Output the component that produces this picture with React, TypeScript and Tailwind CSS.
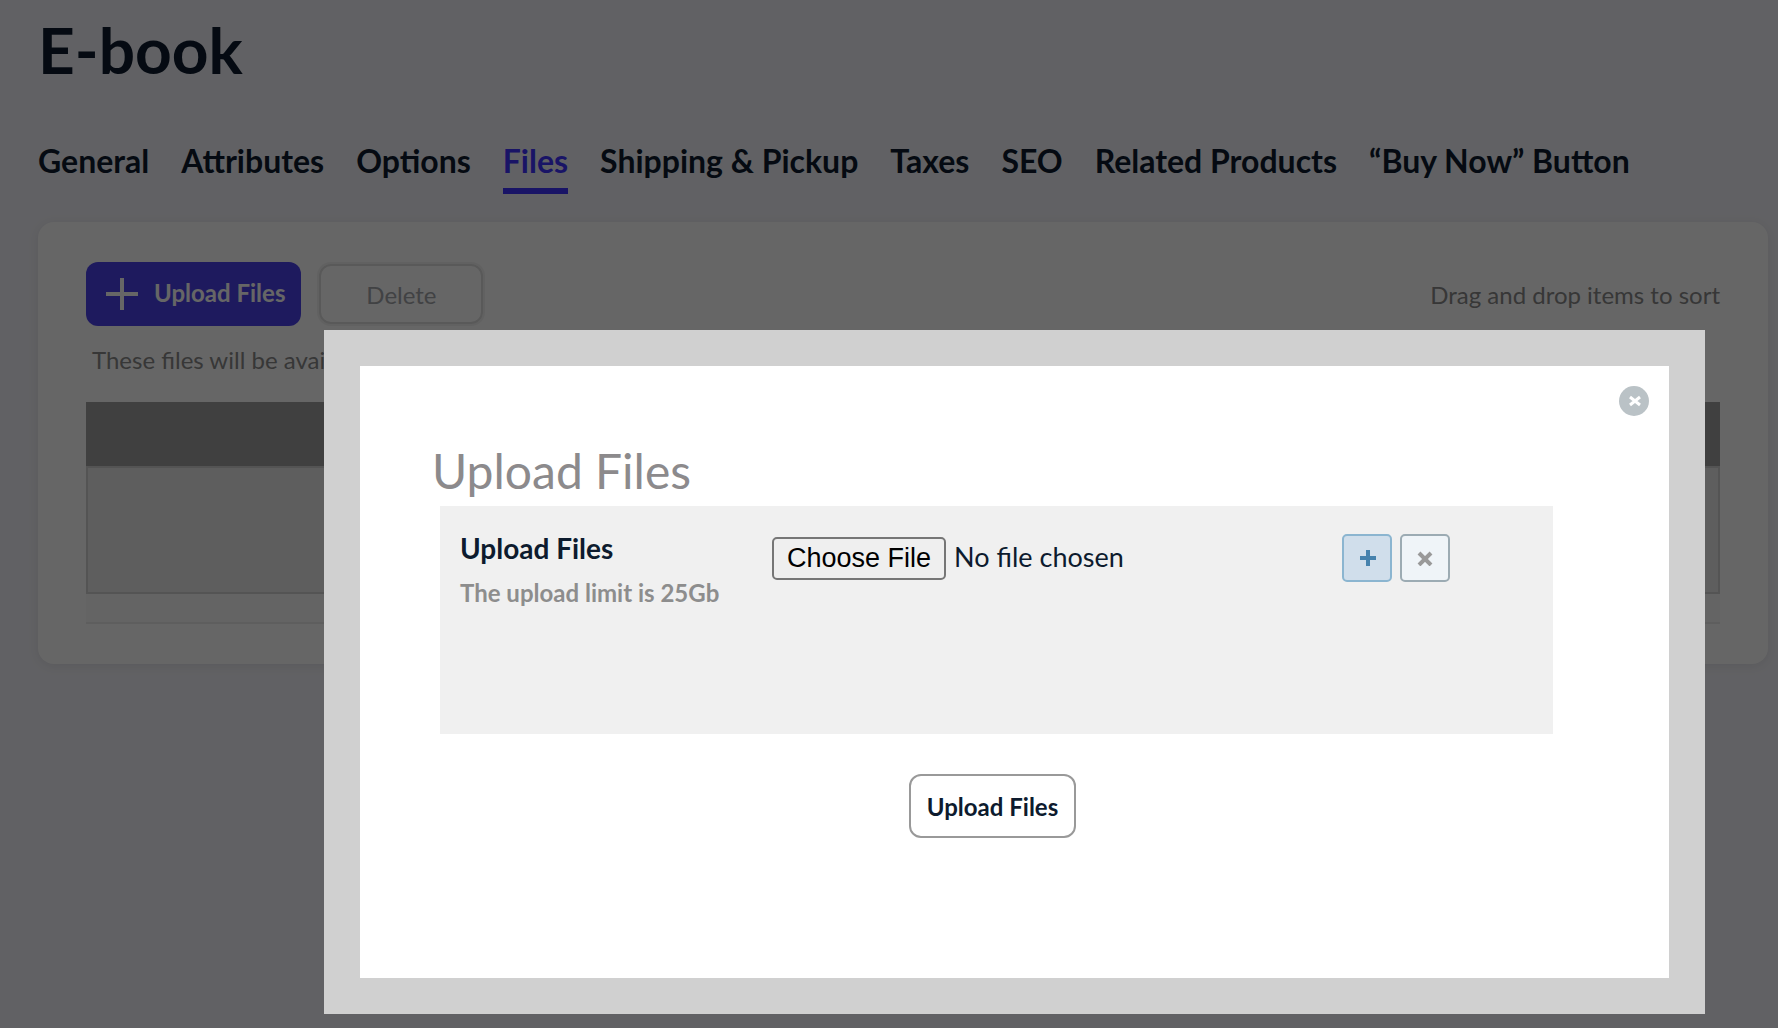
const tabs = [
  "General",
  "Attributes",
  "Options",
  "Files",
  "Shipping & Pickup",
  "Taxes",
  "SEO",
  "Related Products",
  "“Buy Now” Button",
]

function ProductFiles() {
  return (
    <main className="pt-[18px] pl-[38px] pr-[10px]">
      <h1 className="text-[64px] leading-[64px] font-bold">E-book</h1>

      <nav className="mt-[58px] flex gap-8 text-[32px] leading-[42px] font-bold whitespace-nowrap">
        {tabs.map((tab) => (
          <a
            key={tab}
            href="#"
            className={
              tab === "Files"
                ? "border-b-6 border-[#3f32ff] pb-[6px] text-[#3f32ff]"
                : "border-b-6 border-transparent pb-[6px]"
            }
          >
            {tab}
          </a>
        ))}
      </nav>

      <section className="mt-7 rounded-2xl bg-white px-12 py-10 text-2xl shadow-[0_2px_12px_rgba(0,0,0,0.08)]">
        <div className="flex items-center">
          <button className="flex h-16 items-center gap-4 rounded-xl bg-[#4d43eb] pr-4 pl-5 font-bold text-white">
            <svg width="32" height="32" viewBox="0 0 32 32" stroke="currentColor" strokeWidth="4">
              <path d="M16 0v32M0 16h32" />
            </svg>
            <span className="pb-0.5">Upload Files</span>
          </button>
          <button className="ml-[18px] h-[60px] w-[164px] rounded-xl border-2 border-[#dedede] pt-0.5 text-[#a4a5aa] shadow-[0_0_0_2px_#f3f3f3]">
            Delete
          </button>
          <p className="ml-auto pt-0.5 text-[#8a8a8a]">Drag and drop items to sort</p>
        </div>

        <p className="mt-[18px] pl-[6px] text-[#8a8a8a]">
          These files will be available for download after purchase
        </p>

        {/* empty file list */}
        <div className="mt-[26px] h-16 bg-[#a0a0a0]"></div>
        <div className="h-32 border-2 border-[#d2d2d2] bg-[#eaeaea]"></div>
        <div className="h-[30px] border-b-2 border-[#ececec] bg-[#f9f9f9]"></div>
      </section>
    </main>
  )
}

function UploadDialog() {
  return (
    <div className="fixed inset-0 flex items-start bg-black/60 pt-[330px] pr-[73px] pl-[324px]">
      <div role="dialog" aria-labelledby="upload-title" className="flex-1 bg-[#d0d0d0] p-9">
        <div className="relative bg-white pt-[76px] pr-[116px] pb-[140px] pl-[72px]">
          <button aria-label="Close" className="absolute top-5 right-5">
            <svg width="30" height="30" viewBox="0 0 30 30">
              <circle cx="15" cy="15" r="15" fill="#bac2c6" />
              <path d="M11 11l10 8M21 11l-10 8" stroke="#fff" strokeWidth="3" />
            </svg>
          </button>

          <h2 id="upload-title" className="text-5xl leading-[58px] text-[#8c8a8c]">
            Upload Files
          </h2>

          <div className="mt-[6px] ml-2 flex h-[228px] items-start bg-[#f0f0f0] pt-[26px] pr-[103px] pl-5">
            <div className="w-[312px]">
              <label htmlFor="file" className="text-[28px] leading-8 font-bold">
                Upload Files
              </label>
              <p className="mt-3 text-2xl font-bold text-[#8d8d8d]">The upload limit is 25Gb</p>
            </div>
            <input
              id="file"
              type="file"
              className="mt-[5px] flex-1 text-[27px] leading-8 file:mr-2 file:h-[43px] file:rounded-[5px] file:border-2 file:border-solid file:border-[#767676] file:bg-[#efefef] file:px-[13px] file:pb-0.5 file:font-['Liberation_Sans'] file:text-[27px] file:text-black"
            />
            <div className="mt-[2px] flex gap-2">
              <button
                aria-label="Add file"
                className="flex h-12 w-[50px] items-center justify-center rounded-[5px] border-2 border-[#8bb5d0] bg-[#d0deeb]"
              >
                <svg width="18" height="18" viewBox="0 0 18 18" stroke="#4682ad" strokeWidth="4">
                  <path d="M10 1v16M2 9h16" />
                </svg>
              </button>
              <button
                aria-label="Remove file"
                className="flex h-12 w-[50px] items-center justify-center rounded-[5px] border-2 border-[#9cabb3] bg-[#eff4f8]"
              >
                <svg width="16" height="16" viewBox="0 0 16 16" stroke="#999" strokeWidth="4">
                  <path d="M2 3l12 12M14 3L2 15" />
                </svg>
              </button>
            </div>
          </div>

          <div className="mt-10 flex justify-center">
            <button className="h-16 rounded-xl border-2 border-[#999] px-4 pt-0.5 text-2xl font-bold">
              Upload Files
            </button>
          </div>
        </div>
      </div>
    </div>
  )
}

export default function App() {
  return (
    <div className="min-h-screen bg-[#f3f3f9] font-[Lato,sans-serif] text-[#0d1b2e]">
      <ProductFiles />
      <UploadDialog />
    </div>
  )
}
